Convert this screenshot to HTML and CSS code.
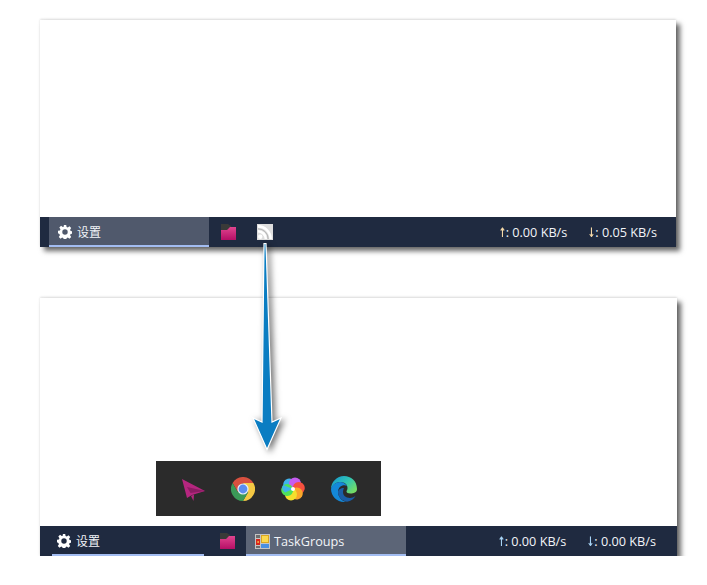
FILE: index.html

```html
<!DOCTYPE html>
<html lang="en">
<head>
  <meta charset="UTF-8" />
  <meta name="viewport" content="width=device-width, initial-scale=1.0"/>
  <title>TaskGroups</title>
  <link rel="stylesheet" href="styles.css">
</head>
<body>
  <svg width="0" height="0" class="defs">
    <defs>
      <symbol id="gear" viewBox="0 0 16 16">
        <path fill="#fff" fill-rule="evenodd" d="M6.600 0h2.800l.4 2.200 1.400.6 1.900-1.300 2 2-1.300 1.900.6 1.400 2.200.4v2.800l-2.200.4-.6 1.400 1.300 1.900-2 2-1.900-1.300-1.400.6-.4 2.200H6.600l-.4-2.200-1.400-.6-1.900 1.300-2-2 1.300-1.900-.6-1.400L0 9.400V6.600l2.200-.4.600-1.400L1.500 2.900l2-2 1.900 1.300 1.400-.6zM8 4.900a3.100 3.100 0 1 0 0 6.200 3.100 3.100 0 0 0 0-6.200z"/>
      </symbol>
      <linearGradient id="folderFill" x1="0" y1="0" x2="0" y2="1">
        <stop offset="0" stop-color="#e0458f"/>
        <stop offset="1" stop-color="#b50f66"/>
      </linearGradient>
      <symbol id="folder" viewBox="0 0 15 16">
        <path fill="#3a3a38" d="M0 0h7l3 2v4H0z"/>
        <path fill="url(#folderFill)" d="M0 6h6l3-3h6v13H0z"/>
      </symbol>
    </defs>
  </svg>

  <div class="window window-top">
    <div class="window-body"></div>
    <div class="taskbar">
      <div class="task task-settings active">
        <svg class="gear"><use href="#gear"/></svg>
        <span class="task-label">设置</span>
      </div>
      <svg class="folder"><use href="#folder"/></svg>
      <svg class="rss" viewBox="0 0 16 16">
        <rect width="16" height="16" fill="#dedede"/>
        <circle cx="3.200" cy="12.800" r="2.200" fill="#fff"/>
        <path d="M1 7.200a7.800 7.800 0 0 1 7.800 7.800M1 2.400A12.600 12.600 0 0 1 13.600 15" fill="none" stroke="#fff" stroke-width="2.600"/>
        <path d="M1 4.800a10.200 10.200 0 0 1 10.200 10.200" fill="none" stroke="#b4b4b4" stroke-width="1"/>
      </svg>
      <div class="speeds">
        <span class="speed"><span class="speed-arrow">↑</span>: 0.00 KB/s</span>
        <span class="speed"><span class="speed-arrow">↓</span>: 0.05 KB/s</span>
      </div>
    </div>
  </div>

  <div class="window window-bottom">
    <div class="window-body"></div>
    <div class="taskbar">
      <div class="task task-settings underlined">
        <svg class="gear"><use href="#gear"/></svg>
        <span class="task-label">设置</span>
      </div>
      <svg class="folder"><use href="#folder"/></svg>
      <div class="task task-groups active">
        <svg class="groups" viewBox="0 0 15 15">
          <rect width="15" height="15" fill="#c4c4c4"/>
          <rect x="1" y="1" width="4" height="3" fill="#6d6d6d"/>
          <rect x="1" y="5" width="4" height="6" fill="#d8261c"/>
          <rect x="2.500" y="7" width="1.200" height="2" fill="#f6d54a"/>
          <rect x="6" y="1" width="8" height="8" fill="#d9a520"/>
          <rect x="7" y="2" width="6" height="6" fill="#fbd94e"/>
          <rect x="6" y="10" width="8" height="4" fill="#4a8fe0"/>
          <rect x="1" y="12" width="4" height="2" fill="#6d6d6d"/>
        </svg>
        <span class="task-label">TaskGroups</span>
      </div>
      <div class="speeds">
        <span class="speed"><span class="speed-arrow">↑</span>: 0.00 KB/s</span>
        <span class="speed"><span class="speed-arrow">↓</span>: 0.00 KB/s</span>
      </div>
    </div>
  </div>

  <!-- arrow and group popup lie over the two windows -->
  <svg class="arrow" viewBox="0 0 28 208">
    <path d="M11 0.500 L13 0.500 L19 179 L28 175 L14 206.500 L0 175 L9 179 Z" fill="#0a7dc2" stroke="#fff" stroke-width="1.200"/>
  </svg>

  <div class="popup">
    <svg class="app" viewBox="0 0 24 24">
      <path fill="#b5267f" d="M1 2L24 14L11 18L6 21z"/>
      <path fill="#8c1c63" d="M6 10L24 14L9.500 16z"/>
      <path fill="#b5267f" d="M10 19L13 17.500L12.500 24z"/>
    </svg>
    <svg class="app" viewBox="0 0 24 24">
      <path fill="#d8503f" d="M1.600 6A12 12 0 0 1 22.400 6H12L6.800 15z"/>
      <path fill="#f5c843" d="M22.400 6A12 12 0 0 1 12 24L17.200 15L12 6z"/>
      <path fill="#3b9a58" d="M12 24A12 12 0 0 1 1.600 6L6.800 15H17.200z"/>
      <circle cx="12" cy="12" r="5.600" fill="#e8eef8"/>
      <circle cx="12" cy="12" r="4.400" fill="#5b8def"/>
    </svg>
    <svg class="app spin" viewBox="0 0 24 24">
      <circle fill="#3fb3ec" transform="rotate(-60 12 12)" cx="14" cy="6.500" r="6"/>
      <circle fill="#c65cf0" cx="14" cy="6.500" r="6"/>
      <circle fill="#f6503f" transform="rotate(60 12 12)" cx="14" cy="6.500" r="6"/>
      <circle fill="#fba72a" transform="rotate(120 12 12)" cx="14" cy="6.500" r="6"/>
      <circle fill="#f5e02c" transform="rotate(180 12 12)" cx="14" cy="6.500" r="6"/>
      <circle fill="#4fe05a" transform="rotate(240 12 12)" cx="14" cy="6.500" r="6"/>
      <path fill="#3fb3ec" d="M12 12L4 15.500A6 6 0 0 1 2 8z"/>
      <circle cx="12" cy="12" r="2" fill="#fff"/>
    </svg>
    <svg class="app edge" viewBox="0 0 26 26">
      <defs>
        <linearGradient id="edgeTop" x1="0" y1="0" x2="1" y2="0.700">
          <stop offset="0" stop-color="#1292d4"/>
          <stop offset="0.550" stop-color="#30c4b4"/>
          <stop offset="1" stop-color="#74dc66"/>
        </linearGradient>
      </defs>
      <path fill="url(#edgeTop)" d="M13 0C20 0 26 5 26 13C26 16.500 22.500 17.500 19.500 17.500C17 17.500 15.500 16.500 15.500 15.500C15.500 14.500 16.500 14 16.500 12C16.500 8 13 6 9 6C4 6 1 10 0 13C0 6 6 0 13 0z"/>
      <path fill="#1488d8" d="M0 13C1 9 5 6 9 6C12 6 15 8 16 10C12 8 7 11 7 16C7 21 11 25 15 26C14.500 26 14 26 13 26C6 26 0 20 0 13z"/>
      <path fill="#1a5ea8" d="M7 16C7 21 11 25 16 25.700C20 25 23 23 24.500 20C22 22 19 22.500 16 21.500C12 20 11 16 13 12C9.500 12 7 14 7 16z"/>
    </svg>
  </div>
</body>
</html>
```

FILE: styles.css

```css
html, body {
  background-color: white;
}

body {
  margin: 0;
  padding: 20px 0 0 40px;
  font-family: "Open Sans", "Noto Sans CJK SC", sans-serif;
  font-size: 12.700px;
  color: #f2f4f8;
}

.defs {
  position: absolute;
}

.window {
  display: flex;
  flex-direction: column;
  background-color: white;
  box-shadow: 0 -1px 2px rgba(0, 0, 0, 0.12), 4px 4px 5px rgba(0, 0, 0, 0.6);
}

.window-top {
  width: 636px;
  height: 227px;
  margin-bottom: 51px;
}

.window-bottom {
  width: 637px;
  height: 258px;
}

.window-body {
  flex: 1;
}

.taskbar {
  display: flex;
  align-items: center;
  height: 30px;
  background-color: #1f2a40;
}

.task {
  display: flex;
  align-items: center;
  box-sizing: border-box;
  height: 30px;
  padding-top: 2px;
  border-bottom: 2px solid transparent;
}

.task-label {
  white-space: nowrap;
}

.task-settings .task-label {
  font-size: 12px;
}

.task.active {
  background-color: #50596c;
  border-bottom-color: #a3bdf2;
}

.task.underlined {
  border-bottom-color: #a3bdf2;
}

.window-top .task-settings {
  width: 160px;
  margin-left: 9px;
  padding-left: 9px;
}

.window-bottom .task-settings {
  width: 152px;
  margin-left: 12px;
  padding-left: 5px;
}

.gear {
  width: 14px;
  height: 14px;
  margin-right: 5px;
}

.folder {
  width: 15px;
  height: 16px;
  margin-left: 12px;
}

.rss {
  width: 16px;
  height: 16px;
  margin-left: 21px;
}

.window-bottom .folder {
  margin-left: 16px;
}

.task-groups {
  width: 160px;
  margin-left: 11px;
  padding-left: 9px;
}

.task-groups.active {
  background-color: #5c6577;
}

.groups {
  width: 15px;
  height: 15px;
  margin-right: 4px;
}

.speeds {
  display: flex;
  gap: 21px;
  margin-left: auto;
  margin-right: 19px;
}

.window-bottom .speeds {
  margin-right: 21px;
}

.speed {
  white-space: nowrap;
}

.speed-arrow {
  display: inline-block;
  width: 7px;
  font-family: "DejaVu Sans", sans-serif;
  font-size: 13px;
  font-weight: bold;
  line-height: 1;
  text-indent: -2px;
  transform: scaleX(0.7);
  color: #f5d9a8;
}

.window-bottom .speed-arrow {
  color: #a8d4f5;
}

.arrow {
  position: absolute;
  left: 253px;
  top: 243px;
  width: 28px;
  height: 208px;
  overflow: visible;
  filter: drop-shadow(3px 2px 3px rgba(0, 0, 0, 0.55));
}

.popup {
  position: absolute;
  left: 156px;
  top: 461px;
  display: flex;
  align-items: center;
  gap: 26px;
  box-sizing: border-box;
  width: 225px;
  height: 55px;
  padding-left: 25px;
  background-color: #2b2b2b;
}

.app {
  width: 24px;
  height: 24px;
  flex-shrink: 0;
}

.edge {
  width: 26px;
  height: 26px;
}
```
